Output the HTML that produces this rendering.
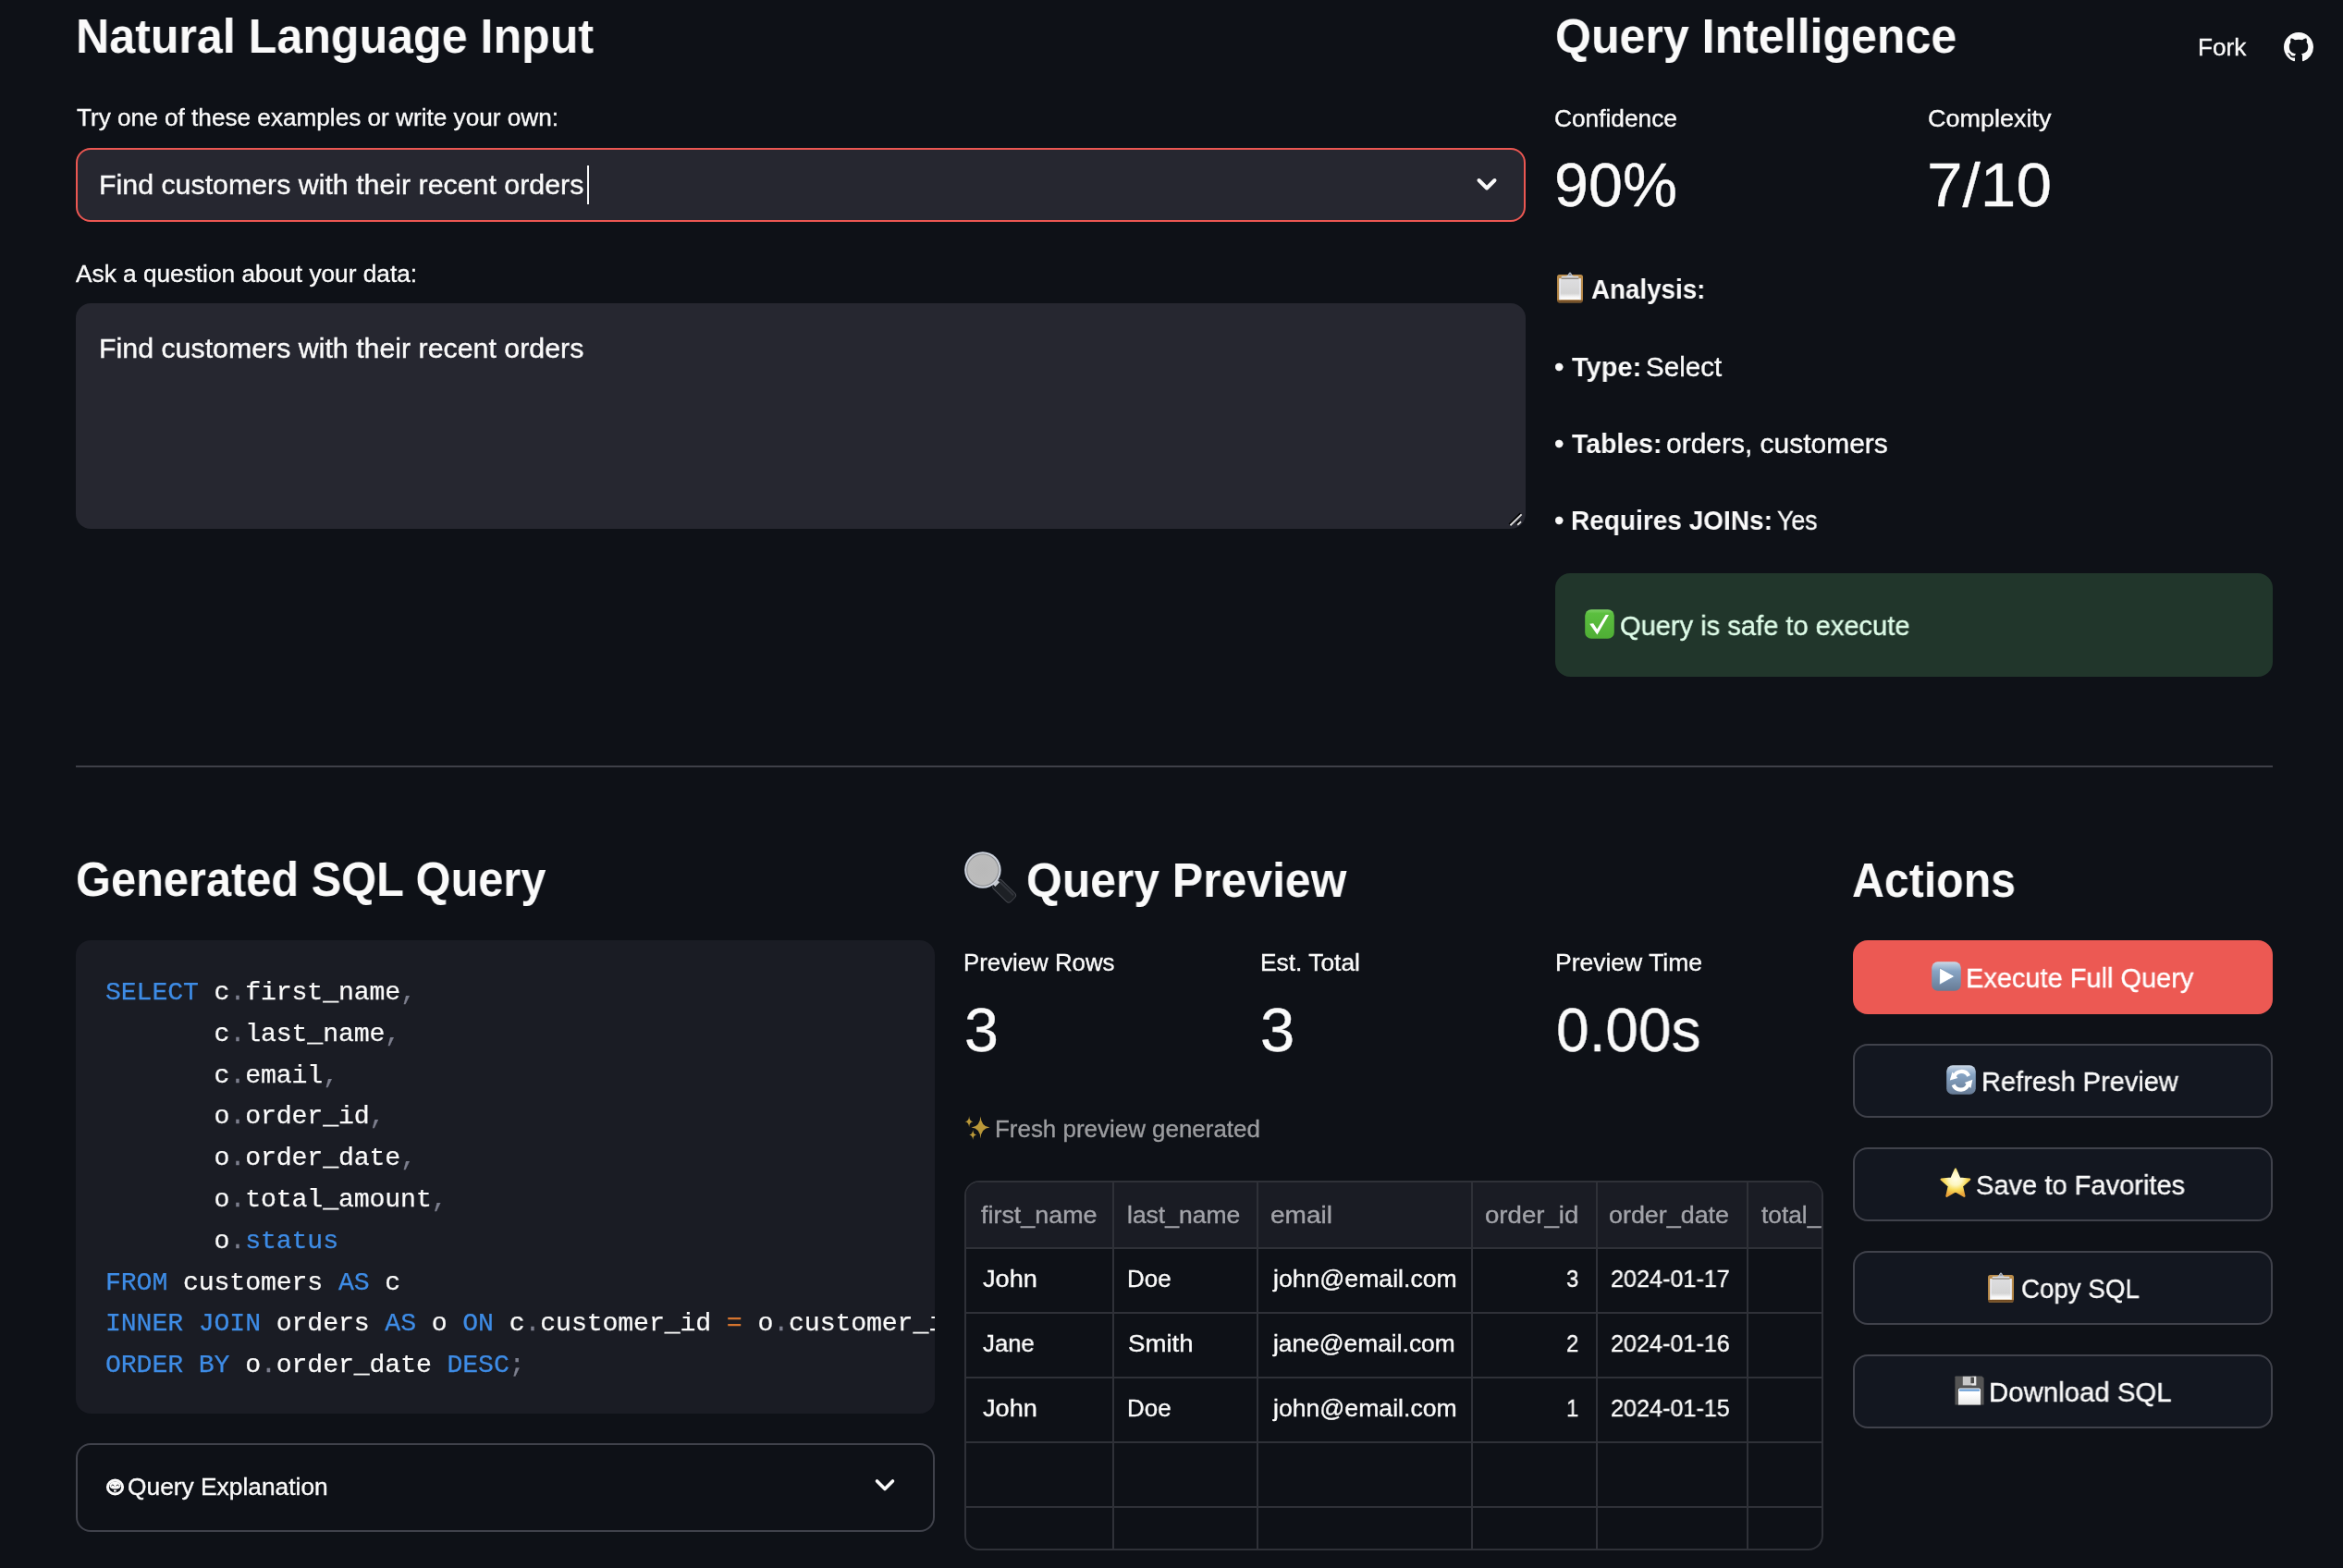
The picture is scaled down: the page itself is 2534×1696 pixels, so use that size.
<!DOCTYPE html>
<html lang="en"><head><meta charset="utf-8"><title>SQL Query Assistant</title>
<style>
html,body{margin:0;padding:0;background:#0e1117;}
body{width:2534px;height:1696px;overflow:hidden;font-family:"Liberation Sans",sans-serif;color:#fafafa;}
#app{position:relative;width:2534px;height:1696px;overflow:hidden;background:#0e1117;}
.t{position:absolute;white-space:nowrap;transform-origin:0 0;display:block;will-change:transform;-webkit-text-stroke:0.35px currentColor;}
.b{position:absolute;box-sizing:border-box;}
.code{position:absolute;left:114px;font-family:"Liberation Mono",monospace;font-size:28.2px;letter-spacing:-0.12px;line-height:44.8px;white-space:pre;color:#fafafa;margin:0;will-change:transform;-webkit-text-stroke:0.25px currentColor;}
.kw{color:#3e8ce6}.pu{color:#7d7f8e}.op{color:#d6752f}
svg{position:absolute;overflow:visible}

</style></head><body>
<div id="app">
<!-- select box -->
<div class="b" style="left:82px;top:160px;width:1568px;height:80px;background:#262730;border:2px solid #eb5752;border-radius:16px"></div>
<div class="b" style="left:635px;top:179px;width:2px;height:42px;background:#fafafa"></div>
<svg style="left:1596px;top:191px" width="24" height="18" viewBox="0 0 24 18"><path d="M3.5 4 L12 12.5 L20.5 4" fill="none" stroke="#fafafa" stroke-width="4" stroke-linecap="round" stroke-linejoin="round"/></svg>
<!-- textarea -->
<div class="b" style="left:82px;top:328px;width:1568px;height:244px;background:#262730;border-radius:16px"></div>
<svg style="left:1630px;top:552px" width="18" height="18" viewBox="0 0 18 18"><path d="M2.2 15.1 L14.4 3.2 M10 14.6 L13.8 11" stroke="#000000" stroke-width="1.8" fill="none"/><path d="M3.4 16.3 L15.6 4.4 M11.2 15.8 L15 12.2" stroke="#dcdcdc" stroke-width="1.9" fill="none"/></svg>
<!-- success -->
<div class="b" style="left:1682px;top:620px;width:776px;height:112px;background:#21362b;border-radius:16px"></div>
<!-- hr -->
<div class="b" style="left:82px;top:828px;width:2376px;height:2px;background:#3e4048"></div>
<!-- code block -->
<div class="b" style="left:82px;top:1017px;width:929px;height:512px;background:#1a1c24;border-radius:16px;overflow:hidden">
<pre class="code" style="left:32px;top:35.1px"><span class="kw">SELECT</span> c<span class="pu">.</span>first_name<span class="pu">,</span>
       c<span class="pu">.</span>last_name<span class="pu">,</span>
       c<span class="pu">.</span>email<span class="pu">,</span>
       o<span class="pu">.</span>order_id<span class="pu">,</span>
       o<span class="pu">.</span>order_date<span class="pu">,</span>
       o<span class="pu">.</span>total_amount<span class="pu">,</span>
       o<span class="pu">.</span><span class="kw">status</span>
<span class="kw">FROM</span> customers <span class="kw">AS</span> c
<span class="kw">INNER</span> <span class="kw">JOIN</span> orders <span class="kw">AS</span> o <span class="kw">ON</span> c<span class="pu">.</span>customer_id <span class="op">=</span> o<span class="pu">.</span>customer_id
<span class="kw">ORDER</span> <span class="kw">BY</span> o<span class="pu">.</span>order_date <span class="kw">DESC</span><span class="pu">;</span></pre>
</div>
<!-- expander -->
<div class="b" style="left:82px;top:1561px;width:929px;height:96px;border:2px solid #40424b;border-radius:16px"></div>
<svg style="left:945px;top:1598px" width="24" height="18" viewBox="0 0 24 18"><path d="M3.5 4 L12 12.5 L20.5 4" fill="none" stroke="#fafafa" stroke-width="3.6" stroke-linecap="round" stroke-linejoin="round"/></svg>
<!-- table -->
<div class="b" style="left:1043px;top:1277px;width:929px;height:400px;border:2px solid #2f3138;border-radius:16px;overflow:hidden;background:#0e1117">
 <div class="b" style="left:0;top:0;width:929px;height:70px;background:#1a1c24"></div>
 <div class="b" style="left:0;top:70px;width:929px;height:2px;background:#2f3138"></div>
 <div class="b" style="left:0;top:140px;width:929px;height:2px;background:#2f3138"></div>
 <div class="b" style="left:0;top:210px;width:929px;height:2px;background:#2f3138"></div>
 <div class="b" style="left:0;top:280px;width:929px;height:2px;background:#2f3138"></div>
 <div class="b" style="left:0;top:350px;width:929px;height:2px;background:#2f3138"></div>
 <div class="b" style="left:158px;top:0;width:2px;height:400px;background:#2f3138"></div>
 <div class="b" style="left:314px;top:0;width:2px;height:400px;background:#2f3138"></div>
 <div class="b" style="left:546px;top:0;width:2px;height:400px;background:#2f3138"></div>
 <div class="b" style="left:680.6px;top:0;width:2px;height:400px;background:#2f3138"></div>
 <div class="b" style="left:844px;top:0;width:2px;height:400px;background:#2f3138"></div>
</div>
<!-- buttons -->
<div class="b" style="left:2004px;top:1017px;width:454px;height:80px;background:#ec5953;border-radius:16px"></div>
<div class="b" style="left:2004px;top:1129px;width:454px;height:80px;background:#131720;border:2px solid #40424b;border-radius:16px"></div>
<div class="b" style="left:2004px;top:1241px;width:454px;height:80px;background:#131720;border:2px solid #40424b;border-radius:16px"></div>
<div class="b" style="left:2004px;top:1353px;width:454px;height:80px;background:#131720;border:2px solid #40424b;border-radius:16px"></div>
<div class="b" style="left:2004px;top:1465px;width:454px;height:80px;background:#131720;border:2px solid #40424b;border-radius:16px"></div>
<!-- shared gradients -->
<svg width="0" height="0" style="left:0;top:0"><defs>
<linearGradient id="gBlue" x1="0" y1="0" x2="0" y2="1"><stop offset="0" stop-color="#cfdbe8"/><stop offset="0.1" stop-color="#b4c7dc"/><stop offset="0.32" stop-color="#87a4c4"/><stop offset="1" stop-color="#677b95"/></linearGradient>
<linearGradient id="gGreen" x1="0" y1="0" x2="0" y2="1"><stop offset="0" stop-color="#7fd268"/><stop offset="0.14" stop-color="#5bbf3f"/><stop offset="1" stop-color="#4fae35"/></linearGradient>
<linearGradient id="gPaper" x1="0" y1="0" x2="0" y2="1"><stop offset="0" stop-color="#dedee0"/><stop offset="0.7" stop-color="#d4d4d4"/><stop offset="0.86" stop-color="#f4f4f4"/><stop offset="1" stop-color="#ffffff"/></linearGradient>
<linearGradient id="gBoard" x1="0" y1="0" x2="0" y2="1"><stop offset="0" stop-color="#bb8d4b"/><stop offset="0.9" stop-color="#b08345"/><stop offset="0.92" stop-color="#6f4a22"/><stop offset="0.97" stop-color="#7a542a"/><stop offset="1" stop-color="#a67a40"/></linearGradient>
<radialGradient id="gStar" cx="0.5" cy="0.36" r="0.62"><stop offset="0" stop-color="#fffde6"/><stop offset="0.38" stop-color="#fdf6c0"/><stop offset="0.66" stop-color="#f8dc5a"/><stop offset="1" stop-color="#eba43a"/></radialGradient>
<radialGradient id="gLens" cx="0.5" cy="0.5" r="0.5"><stop offset="0" stop-color="#b9b9b9"/><stop offset="0.8" stop-color="#bcbcbc"/><stop offset="0.87" stop-color="#8e9094"/><stop offset="0.92" stop-color="#d9dde4"/><stop offset="1" stop-color="#b4bccb"/></radialGradient>
<linearGradient id="gLabel" x1="0" y1="0" x2="0" y2="1"><stop offset="0" stop-color="#ffffff"/><stop offset="0.35" stop-color="#ffffff"/><stop offset="1" stop-color="#e6e6e6"/></linearGradient>
</defs></svg>

<!-- github -->
<svg style="left:2470px;top:35px" width="32" height="32" viewBox="0 0 16 16"><path fill="#fafafa" d="M8 0C3.58 0 0 3.58 0 8c0 3.54 2.29 6.53 5.47 7.59.4.07.55-.17.55-.38 0-.19-.01-.82-.01-1.49-2.01.37-2.53-.49-2.69-.94-.09-.23-.48-.94-.82-1.13-.28-.15-.68-.52-.01-.53.63-.01 1.08.58 1.23.82.72 1.21 1.87.87 2.33.66.07-.52.28-.87.51-1.07-1.78-.2-3.64-.89-3.64-3.95 0-.87.31-1.59.82-2.15-.08-.2-.36-1.02.08-2.12 0 0 .67-.21 2.2.82.64-.18 1.32-.27 2-.27s1.36.09 2 .27c1.53-1.04 2.2-.82 2.2-.82.44 1.1.16 1.92.08 2.12.51.56.82 1.27.82 2.15 0 3.07-1.87 3.75-3.65 3.95.29.25.54.73.54 1.48 0 1.07-.01 1.93-.01 2.2 0 .21.15.46.55.38A8.01 8.01 0 0 0 16 8c0-4.42-3.58-8-8-8z"/></svg>

<!-- clipboard: Analysis -->
<svg style="left:1684px;top:294.4px" width="28" height="34" viewBox="0 0 28 34"><rect x="0" y="3" width="28" height="30.4" rx="2.6" fill="url(#gBoard)"/>
 <rect x="2.4" y="7.2" width="23.2" height="23" fill="url(#gPaper)"/>
 <rect x="2.4" y="7.2" width="1.2" height="23" fill="#eef1f8"/><rect x="24.4" y="7.2" width="1.2" height="23" fill="#eef1f8"/>
 <path d="M9.4 5.2 C12 5 12.2 0.6 14 0.6 C15.8 0.6 16 5 18.6 5.2 Z" fill="#b4bcc9"/>
 <circle cx="14" cy="2.9" r="1.1" fill="#8f949c"/>
 <rect x="4.6" y="4.8" width="18.8" height="2" rx="0.9" fill="#dfe3ea"/>
 <rect x="4.6" y="6.5" width="18.8" height="1.4" rx="0.6" fill="#8d8a86"/></svg>
<!-- clipboard: Copy SQL -->
<svg style="left:2150px;top:1375.6px" width="28" height="33.4" viewBox="0 0 28 34" preserveAspectRatio="none"><rect x="0" y="3" width="28" height="30.4" rx="2.6" fill="url(#gBoard)"/>
 <rect x="2.4" y="7.2" width="23.2" height="23" fill="url(#gPaper)"/>
 <rect x="2.4" y="7.2" width="1.2" height="23" fill="#eef1f8"/><rect x="24.4" y="7.2" width="1.2" height="23" fill="#eef1f8"/>
 <path d="M9.4 5.2 C12 5 12.2 0.6 14 0.6 C15.8 0.6 16 5 18.6 5.2 Z" fill="#b4bcc9"/>
 <circle cx="14" cy="2.9" r="1.1" fill="#8f949c"/>
 <rect x="4.6" y="4.8" width="18.8" height="2" rx="0.9" fill="#dfe3ea"/>
 <rect x="4.6" y="6.5" width="18.8" height="1.4" rx="0.6" fill="#8d8a86"/></svg>

<!-- check -->
<svg style="left:1714px;top:659px" width="32" height="32" viewBox="0 0 32 32"><rect x="0.2" y="0.2" width="31.6" height="31.6" rx="6.8" fill="url(#gGreen)"/><path d="M5.2 15.8 L9.2 15.2 L13.3 21.6 L22.6 6 L26 6 L13.4 27.4 Z" fill="#ffffff"/></svg>

<!-- magnifier -->
<svg style="left:1040px;top:918px" width="62" height="60" viewBox="0 0 62 60">
 <g transform="translate(22.9 23) rotate(44.5)">
  <rect x="19" y="-6.9" width="27" height="13.8" rx="3.8" fill="#44474e"/>
  <rect x="19.6" y="-5.9" width="25.6" height="11.8" rx="3.1" fill="#1d2025"/>
  <rect x="22" y="-4.7" width="21" height="2" rx="1" fill="#31343b"/>
  <rect x="17" y="-3.3" width="5.2" height="6.6" fill="#c9ccd2"/>
 </g>
 <circle cx="22.9" cy="23" r="19.8" fill="url(#gLens)"/>
</svg>

<!-- sparkles (dimmed caption) -->
<svg style="left:1040px;top:1204px;opacity:0.9" width="34" height="34" viewBox="0 0 34 34" fill="#cda73d">
 <path d="M20.5 3.5999999999999996 Q21.2 14.9 30.5 15.6 Q21.2 16.3 20.5 27.6 Q19.8 16.3 10.5 15.6 Q19.8 14.9 20.5 3.5999999999999996 Z"/>
 <path d="M8.1 3.3000000000000007 Q8.4 9.0 12.5 9.3 Q8.4 9.600000000000001 8.1 15.3 Q7.8 9.600000000000001 3.6999999999999993 9.3 Q7.8 9.0 8.1 3.3000000000000007 Z"/>
 <path d="M12.2 18.0 Q12.5 23.2 16.299999999999997 23.5 Q12.5 23.8 12.2 29.0 Q11.899999999999999 23.8 8.1 23.5 Q11.899999999999999 23.2 12.2 18.0 Z"/>
</svg>

<!-- play -->
<svg style="left:2089px;top:1040px" width="32" height="32" viewBox="0 0 32 32"><rect x="0.2" y="0.2" width="31.6" height="31.6" rx="6.6" fill="url(#gBlue)"/><path d="M9.6 7.4 Q8.6 6.8 8.6 8 L8.6 24 Q8.6 25.2 9.6 24.6 L24 16.7 Q24.8 16 24 15.4 Z" fill="#ffffff" stroke="#7593b4" stroke-width="0.8"/></svg>

<!-- refresh -->
<svg style="left:2105px;top:1152px" width="32" height="32" viewBox="0 0 32 32"><rect x="0.2" y="0.2" width="31.6" height="31.6" rx="6.6" fill="url(#gBlue)"/>
 <g fill="none" stroke="#ffffff" stroke-width="4.2">
  <path d="M8.2 13.2 A8.6 8.6 0 0 1 24.2 11.8"/>
  <path d="M23.8 20.2 A8.6 8.6 0 0 1 7.6 21.4"/>
 </g>
 <path d="M3.8 16.6 L6.4 7.6 L12.4 14 Z" fill="#ffffff"/>
 <path d="M28.4 15.8 L26.4 25 L19.8 19 Z" fill="#ffffff"/>
</svg>

<!-- star -->
<svg style="left:2098px;top:1263px" width="34" height="33" viewBox="0 0 34 33"><path d="M16.9 1.6 L21.3 11.6 L32.2 12.7 L24 20 L26.4 30.8 L16.9 25.2 L7.4 30.8 L9.8 20 L1.6 12.7 L12.5 11.6 Z" fill="url(#gStar)" stroke="url(#gStar)" stroke-width="2.2" stroke-linejoin="round"/></svg>

<!-- floppy -->
<svg style="left:2114px;top:1488px" width="32" height="32" viewBox="0 0 32 32">
 <path d="M0.4 1.2 Q0.4 0.4 1.2 0.4 L29.4 0.4 L31.6 2.6 L31.6 31.6 L0.4 31.6 Z" fill="#555555"/>
 <rect x="8.8" y="0.8" width="14.4" height="9.6" fill="#c9c9c9"/><rect x="18.6" y="0.8" width="4.6" height="9.6" fill="#e6e6e6"/>
 <rect x="17.4" y="1.6" width="3.6" height="6.6" rx="0.6" fill="#4a4a4a"/>
 <path d="M3.2 31.6 L3.2 14.6 Q3.2 12.4 5.4 12.4 L26.6 12.4 Q28.8 12.4 28.8 14.6 L28.8 31.6 Z" fill="#454545"/>
 <path d="M3.9 31.6 L3.9 15.4 Q3.9 13.6 5.7 13.6 L26.3 13.6 Q28.1 13.6 28.1 15.4 L28.1 31.6 Z" fill="url(#gLabel)"/>
 <rect x="4.9" y="14.4" width="22.2" height="2.4" rx="0.8" fill="#6a9ed6"/>
</svg>

<!-- nerd face glyph -->
<svg style="left:114px;top:1599px" width="21" height="19" viewBox="0 0 21 19">
 <ellipse cx="10.5" cy="9.5" rx="8.1" ry="7.4" fill="none" stroke="#fafafa" stroke-width="3"/>
 <path d="M4.6 8.2 Q4.8 3.6 10.5 3.6 Q16.2 3.6 16.4 8.2 Q16.2 11.6 10.5 11.6 Q4.8 11.6 4.6 8.2 Z" fill="#fafafa"/>
 <path d="M6.3 8.2 Q7.9 5.6 9.5 8.2 M11.6 8.2 Q13.2 5.6 14.8 8.2" stroke="#0e1117" stroke-width="0.9" fill="none"/>
 <rect x="9" y="12.5" width="2.8" height="2" fill="#fafafa"/>
</svg>

<span class="t" style="left:82.24px;top:12.87px;font-size:52.6px;line-height:52.6px;color:#fafafa;transform:scaleX(0.9536);font-weight:700;-webkit-text-stroke:0;">Natural Language Input</span>
<span class="t" style="left:1681.60px;top:12.87px;font-size:52.6px;line-height:52.6px;color:#fafafa;transform:scaleX(0.9523);font-weight:700;-webkit-text-stroke:0;">Query Intelligence</span>
<span class="t" style="left:82.15px;top:925.27px;font-size:52.6px;line-height:52.6px;color:#fafafa;transform:scaleX(0.9270);font-weight:700;-webkit-text-stroke:0;">Generated SQL Query</span>
<span class="t" style="left:1109.60px;top:925.97px;font-size:52.6px;line-height:52.6px;color:#fafafa;transform:scaleX(0.9478);font-weight:700;-webkit-text-stroke:0;">Query Preview</span>
<span class="t" style="left:2003.28px;top:925.77px;font-size:52.6px;line-height:52.6px;color:#fafafa;transform:scaleX(0.9181);font-weight:700;-webkit-text-stroke:0;">Actions</span>
<span class="t" style="left:83.20px;top:114.76px;font-size:25.8px;line-height:25.8px;color:#fafafa;transform:scaleX(1.0141);">Try one of these examples or write your own:</span>
<span class="t" style="left:82.40px;top:283.56px;font-size:25.8px;line-height:25.8px;color:#fafafa;transform:scaleX(1.0173);">Ask a question about your data:</span>
<span class="t" style="left:1681.38px;top:115.56px;font-size:25.8px;line-height:25.8px;color:#fafafa;transform:scaleX(1.0189);">Confidence</span>
<span class="t" style="left:2085.25px;top:115.56px;font-size:25.8px;line-height:25.8px;color:#fafafa;transform:scaleX(1.0459);">Complexity</span>
<span class="t" style="left:1042.00px;top:1029.16px;font-size:25.8px;line-height:25.8px;color:#fafafa;transform:scaleX(0.9986);">Preview Rows</span>
<span class="t" style="left:1362.66px;top:1029.16px;font-size:25.8px;line-height:25.8px;color:#fafafa;transform:scaleX(1.0218);">Est. Total</span>
<span class="t" style="left:1682.15px;top:1029.16px;font-size:25.8px;line-height:25.8px;color:#fafafa;transform:scaleX(1.0272);">Preview Time</span>
<span class="t" style="left:2377.37px;top:38.86px;font-size:25.8px;line-height:25.8px;color:#fafafa;transform:scaleX(1.0142);">Fork</span>
<span class="t" style="left:1075.89px;top:1208.66px;font-size:25.8px;line-height:25.8px;color:#9c9da0;transform:scaleX(1.0053);">Fresh preview generated</span>
<span class="t" style="left:138.18px;top:1596.06px;font-size:25.8px;line-height:25.8px;color:#fafafa;transform:scaleX(1.0210);">Query Explanation</span>
<span class="t" style="left:107.14px;top:185.33px;font-size:29.5px;line-height:29.5px;color:#fafafa;transform:scaleX(1.0283);">Find customers with their recent orders</span>
<span class="t" style="left:107.14px;top:361.63px;font-size:29.5px;line-height:29.5px;color:#fafafa;transform:scaleX(1.0283);">Find customers with their recent orders</span>
<span class="t" style="left:1720.70px;top:298.23px;font-size:29.5px;line-height:29.5px;color:#fafafa;transform:scaleX(0.9405);font-weight:700;-webkit-text-stroke:0;">Analysis:</span>
<span class="t" style="left:1681.39px;top:381.93px;font-size:29.5px;line-height:29.5px;color:#fafafa;transform:scaleX(1.0111);">•</span>
<span class="t" style="left:1699.60px;top:381.93px;font-size:29.5px;line-height:29.5px;color:#fafafa;transform:scaleX(0.9829);font-weight:700;-webkit-text-stroke:0;">Type:</span>
<span class="t" style="left:1780.00px;top:381.93px;font-size:29.5px;line-height:29.5px;color:#fafafa;transform:scaleX(1.0026);">Select</span>
<span class="t" style="left:1681.39px;top:464.63px;font-size:29.5px;line-height:29.5px;color:#fafafa;transform:scaleX(1.0111);">•</span>
<span class="t" style="left:1699.60px;top:464.63px;font-size:29.5px;line-height:29.5px;color:#fafafa;transform:scaleX(0.9637);font-weight:700;-webkit-text-stroke:0;">Tables:</span>
<span class="t" style="left:1801.78px;top:464.63px;font-size:29.5px;line-height:29.5px;color:#fafafa;transform:scaleX(1.0157);">orders, customers</span>
<span class="t" style="left:1681.39px;top:547.93px;font-size:29.5px;line-height:29.5px;color:#fafafa;transform:scaleX(1.0111);">•</span>
<span class="t" style="left:1698.65px;top:547.93px;font-size:29.5px;line-height:29.5px;color:#fafafa;transform:scaleX(0.9495);font-weight:700;-webkit-text-stroke:0;">Requires JOINs:</span>
<span class="t" style="left:1921.50px;top:547.93px;font-size:29.5px;line-height:29.5px;color:#fafafa;transform:scaleX(0.9055);">Yes</span>
<span class="t" style="left:1752.41px;top:662.43px;font-size:29.5px;line-height:29.5px;color:#dffde9;transform:scaleX(0.9855);">Query is safe to execute</span>
<span class="t" style="left:2126.34px;top:1042.93px;font-size:29.5px;line-height:29.5px;color:#ffffff;transform:scaleX(0.9823);">Execute Full Query</span>
<span class="t" style="left:2142.83px;top:1154.93px;font-size:29.5px;line-height:29.5px;color:#fafafa;transform:scaleX(0.9832);">Refresh Preview</span>
<span class="t" style="left:2137.41px;top:1266.93px;font-size:29.5px;line-height:29.5px;color:#fafafa;transform:scaleX(0.9851);">Save to Favorites</span>
<span class="t" style="left:2185.86px;top:1378.93px;font-size:29.5px;line-height:29.5px;color:#fafafa;transform:scaleX(0.9392);">Copy SQL</span>
<span class="t" style="left:2151.01px;top:1490.93px;font-size:29.5px;line-height:29.5px;color:#fafafa;transform:scaleX(0.9959);">Download SQL</span>
<span class="t" style="left:1680.50px;top:167.19px;font-size:66.4px;line-height:66.4px;color:#fafafa;transform:scaleX(1.0004);">90%</span>
<span class="t" style="left:2084.27px;top:167.19px;font-size:66.4px;line-height:66.4px;color:#fafafa;transform:scaleX(1.0443);">7/10</span>
<span class="t" style="left:1042.61px;top:1081.39px;font-size:66.4px;line-height:66.4px;color:#fafafa;transform:scaleX(0.9969);">3</span>
<span class="t" style="left:1362.68px;top:1081.39px;font-size:66.4px;line-height:66.4px;color:#fafafa;transform:scaleX(1.0094);">3</span>
<span class="t" style="left:1683.27px;top:1081.39px;font-size:66.4px;line-height:66.4px;color:#fafafa;transform:scaleX(0.9639);">0.00s</span>
<span class="t" style="left:1061.20px;top:1301.56px;font-size:25.8px;line-height:25.8px;color:#a2a3a9;transform:scaleX(1.0426);">first_name</span>
<span class="t" style="left:1218.97px;top:1301.56px;font-size:25.8px;line-height:25.8px;color:#a2a3a9;transform:scaleX(1.0266);">last_name</span>
<span class="t" style="left:1374.41px;top:1301.56px;font-size:25.8px;line-height:25.8px;color:#a2a3a9;transform:scaleX(1.0863);">email</span>
<span class="t" style="left:1606.13px;top:1301.56px;font-size:25.8px;line-height:25.8px;color:#a2a3a9;transform:scaleX(1.0704);">order_id</span>
<span class="t" style="left:1740.36px;top:1301.56px;font-size:25.8px;line-height:25.8px;color:#a2a3a9;transform:scaleX(1.0419);">order_date</span>
<div style="position:absolute;left:0;top:0;width:1970px;height:1696px;overflow:hidden"><span class="t" style="left:1905.10px;top:1301.56px;font-size:25.8px;line-height:25.8px;color:#a2a3a9;transform:scaleX(1.0195);">total_amount</span></div>
<span class="t" style="left:1062.70px;top:1371.16px;font-size:25.8px;line-height:25.8px;color:#fafafa;transform:scaleX(1.0514);">John</span>
<span class="t" style="left:1218.79px;top:1371.16px;font-size:25.8px;line-height:25.8px;color:#fafafa;transform:scaleX(1.0050);">Doe</span>
<span class="t" style="left:1376.53px;top:1371.16px;font-size:25.8px;line-height:25.8px;color:#fafafa;transform:scaleX(1.0322);">john@email.com</span>
<span class="t" style="left:1693.58px;top:1371.16px;font-size:25.8px;line-height:25.8px;color:#fafafa;transform:scaleX(0.9300);">3</span>
<span class="t" style="left:1741.52px;top:1371.16px;font-size:25.8px;line-height:25.8px;color:#fafafa;transform:scaleX(0.9762);">2024-01-17</span>
<span class="t" style="left:1062.70px;top:1441.16px;font-size:25.8px;line-height:25.8px;color:#fafafa;transform:scaleX(0.9965);">Jane</span>
<span class="t" style="left:1219.73px;top:1441.16px;font-size:25.8px;line-height:25.8px;color:#fafafa;transform:scaleX(1.0693);">Smith</span>
<span class="t" style="left:1376.52px;top:1441.16px;font-size:25.8px;line-height:25.8px;color:#fafafa;transform:scaleX(1.0218);">jane@email.com</span>
<span class="t" style="left:1693.58px;top:1441.16px;font-size:25.8px;line-height:25.8px;color:#fafafa;transform:scaleX(0.9300);">2</span>
<span class="t" style="left:1741.52px;top:1441.16px;font-size:25.8px;line-height:25.8px;color:#fafafa;transform:scaleX(0.9762);">2024-01-16</span>
<span class="t" style="left:1062.70px;top:1511.16px;font-size:25.8px;line-height:25.8px;color:#fafafa;transform:scaleX(1.0514);">John</span>
<span class="t" style="left:1218.79px;top:1511.16px;font-size:25.8px;line-height:25.8px;color:#fafafa;transform:scaleX(1.0050);">Doe</span>
<span class="t" style="left:1376.53px;top:1511.16px;font-size:25.8px;line-height:25.8px;color:#fafafa;transform:scaleX(1.0322);">john@email.com</span>
<span class="t" style="left:1693.58px;top:1511.16px;font-size:25.8px;line-height:25.8px;color:#fafafa;transform:scaleX(0.9300);">1</span>
<span class="t" style="left:1741.52px;top:1511.16px;font-size:25.8px;line-height:25.8px;color:#fafafa;transform:scaleX(0.9762);">2024-01-15</span>
</div>
</body></html>
